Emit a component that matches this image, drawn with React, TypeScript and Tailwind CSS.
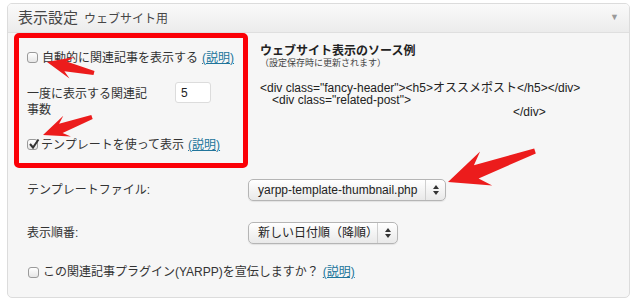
const jp = "font-['Liberation_Sans','Noto_Sans_CJK_JP',sans-serif]";

type Pt = [number, number];

// swept arrow polygon from tail to tip
const arrowPoints = (tail: Pt, tip: Pt, hl: number, hw: number, w0: number, w1: number) => {
	const dx = tip[0] - tail[0];
	const dy = tip[1] - tail[1];
	const len = Math.hypot(dx, dy);
	const u: Pt = [dx / len, dy / len];
	const n: Pt = [-u[1], u[0]];
	const at = (a: number, b: number): string => {
		const x = tail[0] + u[0] * a + n[0] * b;
		const y = tail[1] + u[1] * a + n[1] * b;
		return `${x.toFixed(1)},${y.toFixed(1)}`;
	};
	const neck = len - hl;
	return [
		at(0, w0),
		at(neck, w1),
		at(neck - hl * 0.35, hw),
		at(len, 0),
		at(neck - hl * 0.35, -hw),
		at(neck, -w1),
		at(0, -w0),
	].join(" ");
};

const Checkbox = ({ checked = false }: { checked?: boolean }) => (
	<span className="relative inline-block w-[11px] h-[11px] rounded-[3px] border border-[#9a9a9a] bg-gradient-to-b from-white to-[#e6e6e6] shrink-0">
		{checked && (
			<svg className="absolute left-[0px] top-[-2px]" width="12" height="12" viewBox="0 0 12 12">
				<path d="M2 6 L5 9.5 L10.5 1.5" fill="none" stroke="#333" strokeWidth="2" />
			</svg>
		)}
	</span>
);

const HelpLink = () => <a className="text-[#21759b] underline ml-[4px]">(説明)</a>;

const SelectBox = ({ label, width }: { label: string; width: string }) => (
	<div
		className={`flex items-stretch h-[22px] ${width} rounded-[5px] border border-[#b5b5b5] bg-gradient-to-b from-white to-[#e9e9e9] shadow-[0_1px_1px_rgba(0,0,0,0.08)]`}
	>
		<span className="flex-1 flex items-center pl-[9px] text-[12px] text-[#222]">{label}</span>
		<span className="w-[20px] flex items-center justify-center border-l border-[#cfcfcf]">
			<svg width="6" height="10" viewBox="0 0 6 10">
				<path d="M3 0 L6 4 L0 4 Z M0 6 L6 6 L3 10 Z" fill="#333" />
			</svg>
		</span>
	</div>
);

export default function App() {
	return (
		<div className={`relative w-[640px] h-[306px] bg-white ${jp} text-[#333]`}>
			<div className="pt-[3px] pl-[7px]">
				<div className="w-[623px] h-[295px] rounded-[5px] border border-[#dcdcdc] bg-[#f6f6f6] overflow-hidden">
					{/* Header */}
					<div className="h-[29px] flex items-center pl-[10px] pr-[10px] border-b border-[#dfdfdf] bg-gradient-to-b from-[#fafafa] to-[#ececec]">
						<span className="text-[15px] text-[#464646]">表示設定</span>
						<span className="text-[12px] text-[#464646] ml-[6px] mt-[2px]">ウェブサイト用</span>
						<span className="ml-auto text-[9px] text-[#9a9a9a]">▼</span>
					</div>

					{/* Top area */}
					<div className="flex">
						<div className="ml-[6px] w-[234px] h-[135px] border-[5px] border-[#fb0007] rounded-[5px] text-[12px] pl-[8px]">
							<div className="flex items-center h-[17px] mt-[11px]">
								<Checkbox />
								<span className="ml-[4px]">自動的に関連記事を表示する</span>
								<HelpLink />
							</div>
							<div className="flex items-start mt-[16px]">
								<span className="w-[124px] leading-[16px] mt-[4px]">一度に表示する関連記事数</span>
								<span className="ml-[24px] w-[36px] h-[21px] bg-white border border-[#dcdcdc] rounded-[3px] flex items-center pl-[5px] text-[12px] text-[#222]">
									5
								</span>
							</div>
							<div className="flex items-center h-[17px] mt-[18px]">
								<Checkbox checked />
								<span className="ml-[3px]">テンプレートを使って表示</span>
								<HelpLink />
							</div>
						</div>

						<div className="ml-[12px] pt-[11px] text-[#222]">
							<div className="text-[12px] font-bold leading-[14px]">ウェブサイト表示のソース例</div>
							<div className="text-[9px] leading-[11px] text-[#444]">（設定保存時に更新されます）</div>
							<div className="mt-[13px] text-[12px] leading-[13px]">
								<div>{'<div class="fancy-header"><h5>オススメポスト</h5></div>'}</div>
								<div className="pl-[12px] -mt-[1px]">{'<div class="related-post">'}</div>
								<div className="pl-[253px] -mt-[1px]">{"</div>"}</div>
							</div>
						</div>
					</div>

					{/* Rows */}
					<div className="pl-[19px] text-[12px]">
						<div className="flex items-center mt-[11px]">
							<span className="w-[221px]">テンプレートファイル:</span>
							<SelectBox label="yarpp-template-thumbnail.php" width="w-[198px]" />
						</div>
						<div className="flex items-center mt-[21px]">
							<span className="w-[221px]">表示順番:</span>
							<SelectBox label="新しい日付順（降順）" width="w-[150px]" />
						</div>
						<div className="flex items-center mt-[19px] pl-[1px]">
							<Checkbox />
							<span className="ml-[4px]">この関連記事プラグイン(YARPP)を宣伝しますか？</span>
							<HelpLink />
						</div>
					</div>
				</div>
			</div>

			{/* Red arrows */}
			<svg className="absolute left-0 top-0 pointer-events-none" width="640" height="306">
				<polygon points={arrowPoints([94, 73], [47, 62], 19, 11, 2, 5)} fill="#ec1c1c" />
				<polygon points={arrowPoints([92, 117], [43, 135], 19, 11, 2, 5)} fill="#ec1c1c" />
				<polygon points={arrowPoints([535, 151], [448, 182], 30, 18, 2.5, 7)} fill="#ec1c1c" />
			</svg>
		</div>
	);
}
